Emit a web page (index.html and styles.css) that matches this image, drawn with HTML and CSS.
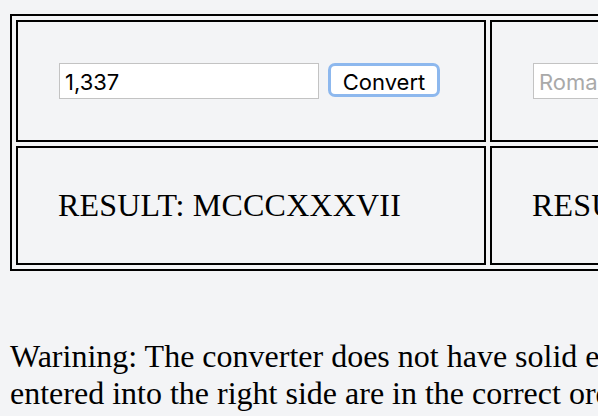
FILE: index.html
```html
<!DOCTYPE html>
<html>
<head>
<meta charset="utf-8">
<title>Roman Numeral Converter</title>
<link rel="stylesheet" href="styles.css">
</head>
<body>
<div class="page">
  <div class="board">
    <div class="cell cell-form">
      <input class="field" type="text" value="1,337">
      <button class="btn" type="button">Convert</button>
    </div>
    <div class="cell cell-form">
      <input class="field" type="text" placeholder="Roman numeral">
      <button class="btn btn-plain" type="button">Convert</button>
    </div>
    <div class="cell cell-result">RESULT: MCCCXXXVII</div>
    <div class="cell cell-result">RESULT: 1337</div>
  </div>
  <p class="warning">Warining: The converter does not have solid error checking. Make sure the numerals entered into the right side are in the correct order.</p>
</div>
</body>
</html>
```

FILE: styles.css
```css
html, body {
  margin: 0;
  padding: 0;
  background: #f3f4f6;
  overflow: hidden;
}

.page {
  padding: 14px 10px 0 10px;
  font-family: "Liberation Serif", "Times New Roman", serif;
  color: #000;
  width: 1200px;
}

.board {
  display: grid;
  grid-template-columns: 470px 470px;
  grid-template-rows: 122px 119px;
  gap: 4px;
  padding: 4px;
  border: 2px solid #000;
  width: max-content;
}

.cell {
  box-sizing: border-box;
  border: 2px solid #000;
  display: flex;
  align-items: center;
}

.cell-form {
  padding: 0 0 1px 41px;
  gap: 9px;
}

.cell-result {
  padding: 0 40px;
  font-size: 32px;
  letter-spacing: 0.2px;
}

.field {
  box-sizing: border-box;
  width: 260px;
  height: 36px;
  margin: 0;
  padding: 3px 5px 0 5px;
  border: 1px solid #c3c3c3;
  border-radius: 0;
  background: #fff;
  font-family: Inter, "Liberation Sans", Arial, sans-serif;
  font-size: 22px;
  color: #000;
  outline: none;
}

.field::placeholder {
  color: #a9a9a9;
}

.btn {
  box-sizing: border-box;
  width: 112px;
  height: 34px;
  margin: 0 0 2px 0;
  padding: 3px 0 0 0;
  border: 3px solid #8db8ee;
  border-radius: 7px;
  background: #fff;
  font-family: Inter, "Liberation Sans", Arial, sans-serif;
  font-size: 22px;
  color: #000;
}

.btn-plain {
  border: 1px solid #b5b5b5;
}

.warning {
  margin: 67px 0 0 0;
  width: 1120px;
  font-size: 32px;
}
```
